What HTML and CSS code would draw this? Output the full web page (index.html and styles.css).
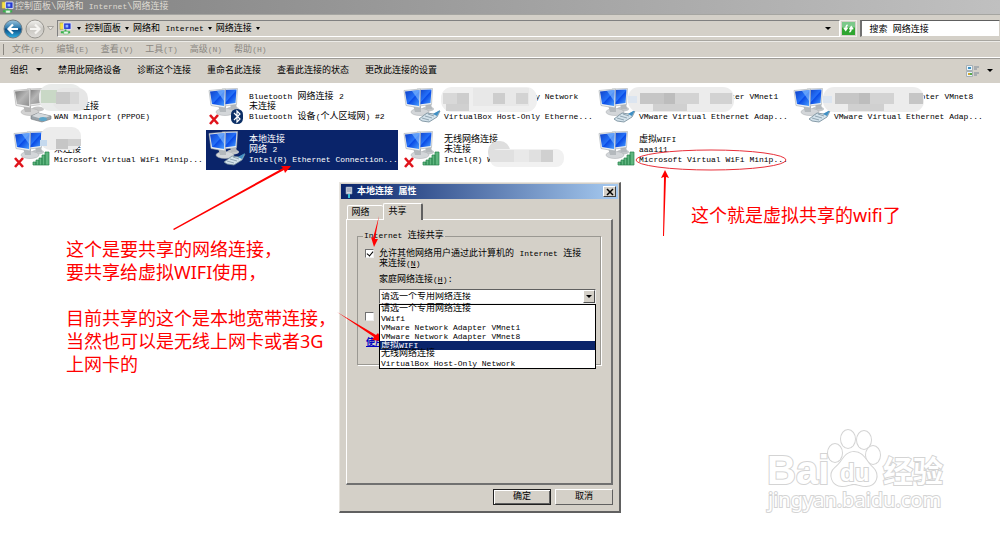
FILE: index.html
```html
<!DOCTYPE html>
<html lang="zh-CN">
<head>
  <meta charset="UTF-8" />
  <meta name="viewport" content="width=device-width, initial-scale=1.0" />
  <title>控制面板\网络和 Internet\网络连接</title>
  <link rel="stylesheet" href="styles.css">
</head>
<body>
  <svg class="defs" aria-hidden="true">
    <defs>
      <linearGradient id="screen" x1="0" y1="0" x2="1" y2="1">
        <stop offset="0" stop-color="#0f3fc4" /><stop offset=".5" stop-color="#2470f8" /><stop offset=".55" stop-color="#0a4be6" /><stop offset="1" stop-color="#4aa0ff" />
      </linearGradient>
      <linearGradient id="screenOff" x1="0" y1="0" x2="1" y2="1">
        <stop offset="0" stop-color="#777" /><stop offset=".5" stop-color="#b5b5b5" /><stop offset="1" stop-color="#8e8e8e" />
      </linearGradient>
      <linearGradient id="orb" x1="0" y1="0" x2="0" y2="1">
        <stop offset="0" stop-color="#9cc4dc" /><stop offset=".45" stop-color="#2b78ac" /><stop offset=".5" stop-color="#0c4a80" /><stop offset="1" stop-color="#2fb4e8" />
      </linearGradient>
      <linearGradient id="orbOff" x1="0" y1="0" x2="0" y2="1">
        <stop offset="0" stop-color="#f2f1ee" /><stop offset=".5" stop-color="#c9c7c2" /><stop offset="1" stop-color="#dedcd8" />
      </linearGradient>
    </defs>
    <symbol id="pc" viewBox="0 0 42 40">
      <ellipse cx="27" cy="22" rx="6" ry="2.500" fill="#c3c7ca" />
      <path d="M24 16 30 16 31 22 25 22z" fill="#b4b9bd" />
      <path d="M16 2 31.500 1.500 30.500 17.500 18 19z" fill="#eef1f3" stroke="#a5abb0" stroke-width=".6" />
      <path d="M17 3 30.500 2.500 29.500 16 18 17.500z" fill="url(#screen)" />
      <ellipse cx="19" cy="25" rx="9" ry="3.500" fill="#d3d6d9" stroke="#a5a9ad" stroke-width=".5" />
      <path d="M12 18 20 19 20 25 14 25z" fill="#b4b9bd" />
      <path d="M3 3.500 19.500 2 19 21 5 18.500z" fill="#eef1f3" stroke="#a5abb0" stroke-width=".6" />
      <path d="M4 4.500 18.500 3 18 19 6 17z" fill="url(#screen)" />
      <path d="M11 4 18.500 3 18 14z" fill="#8cc4ff" opacity=".6" />
    </symbol>
    <symbol id="pc-off" viewBox="0 0 42 40">
      <ellipse cx="27" cy="22" rx="6" ry="2.500" fill="#c5c5c5" />
      <path d="M16 2 31.500 1.500 30.500 17.500 18 19z" fill="#eee" stroke="#aaa" stroke-width=".6" />
      <path d="M17 3 30.500 2.500 29.500 16 18 17.500z" fill="url(#screenOff)" />
      <ellipse cx="19" cy="25" rx="9" ry="3.500" fill="#d2d2d2" stroke="#aaa" stroke-width=".5" />
      <path d="M12 18 20 19 20 25 14 25z" fill="#b5b5b5" />
      <path d="M3 3.500 19.500 2 19 21 5 18.500z" fill="#eee" stroke="#aaa" stroke-width=".6" />
      <path d="M4 4.500 18.500 3 18 19 6 17z" fill="url(#screenOff)" />
    </symbol>
    <symbol id="plug" viewBox="0 0 42 40">
      <path d="M18 32 26 26 33 27 39 24 36 30 28 35 21 34z" fill="#d3e2eb" stroke="#6f8796" stroke-width=".8" />
      <path d="M32 27 39 23 36 29z" fill="#3f8fc4" />
      <path d="M21 31 28 33M24 29 31 31M27 27 33 29" stroke="#7f95a3" stroke-width=".8" />
    </symbol>
    <symbol id="modem" viewBox="0 0 42 40">
      <path d="M20 29 27 26 40 29 40 32 31 35 20 32z" fill="#9aa2a8" stroke="#73797d" stroke-width=".6" />
      <path d="M21 29 27 26 39 29 31 32z" fill="#d5d9dc" />
      <ellipse cx="32" cy="32" rx="4" ry="2" fill="#5ea5c8" />
    </symbol>
    <symbol id="bars" viewBox="0 0 42 40">
      <path d="M22 35v-3h3v3zM25 35v-5h3v5zM28 35v-7h3v7zM31 35v-10h3v10zM34 35v-13h4v13z" fill="#5fb67f" stroke="#26824a" stroke-width=".7" />
    </symbol>
    <symbol id="cross" viewBox="0 0 42 40">
      <path d="M4 28 12 37M12 28 4 37" stroke="#e0141c" stroke-width="2.600" />
    </symbol>
    <symbol id="bt" viewBox="0 0 42 40">
      <rect x="25" y="22" width="12" height="15" rx="5.500" fill="#0c2f66" />
      <path d="M28 26 34 32 31 35V24L34 27 28 33" fill="none" stroke="#fff" stroke-width="1.200" />
    </symbol>
    <symbol id="net" viewBox="0 0 14 14">
      <path d="M1 1h4v7H1z" fill="#f4e04a" stroke="#9a9140" stroke-width=".5" />
      <path d="M5 1h8v7H5z" fill="#2438d0" stroke="#e6e9f5" />
      <path d="M7 3h3v3H7z" fill="#8fb4ff" />
      <path d="M2 11h10M7 8v3" stroke="#37b24a" stroke-width="2" />
      <path d="M5 10h5v3H5z" fill="#e8f5ea" stroke="#37b24a" stroke-width=".5" />
    </symbol>
  </svg>

  <header class="titlebar">
    <svg class="net-icon"><use href="#net" /></svg>
    <h1>控制面板\网络和 <span class="en">Internet</span>\网络连接</h1>
  </header>

  <div class="navbar">
    <button class="orb" aria-label="后退">
      <svg viewBox="0 0 20 20"><circle cx="10" cy="10" r="9" fill="url(#orb)" stroke="#6b7d88" /><path d="M15 10H6M10 5.500 5.500 10 10 14.500" fill="none" stroke="#fff" stroke-width="2.200" /></svg>
    </button>
    <button class="orb" aria-label="前进">
      <svg viewBox="0 0 20 20"><circle cx="10" cy="10" r="9" fill="url(#orbOff)" stroke="#989690" /><path d="M5 10H14M10 5.500 14.500 10 10 14.500" fill="none" stroke="#f6f5f2" stroke-width="2.200" /></svg>
    </button>
    <button class="history" aria-label="最近页面"><svg viewBox="0 0 7 5"><path d="M.5 .5h6L3.500 4z" fill="#e8e6e1" stroke="#8f8d88" stroke-width=".7" /></svg></button>
    <nav class="address">
      <svg class="net-icon"><use href="#net" /></svg>
      <span class="caret"></span><a href="#">控制面板</a>
      <span class="caret"></span><a href="#">网络和 <span class="en">Internet</span></a>
      <span class="caret"></span><a href="#">网络连接</a>
      <span class="caret"></span>
      <span class="caret last"></span>
    </nav>
    <button class="refresh" aria-label="刷新">
      <svg viewBox="0 0 14 14"><path d="M0 0h14v14H0z" fill="#2fa52f" /><path d="M0 0h14v6H0z" fill="#7cc98a" /><path d="M6 3Q4 4 4 8M2 6 4 9 6 6M8 11Q10 10 10 6M8 8 10 5 12 8" fill="none" stroke="#fff" stroke-width="1.500" /></svg>
    </button>
    <input class="search" type="text" aria-label="搜索" value="搜索 网络连接">
  </div>

  <div class="menubar">
    <button>文件<span class="en">(F)</span></button>
    <button>编辑<span class="en">(E)</span></button>
    <button>查看<span class="en">(V)</span></button>
    <button>工具<span class="en">(T)</span></button>
    <button>高级<span class="en">(N)</span></button>
    <button>帮助<span class="en">(H)</span></button>
  </div>

  <div class="toolbar">
    <button>组织<span class="caret"></span></button>
    <button>禁用此网络设备</button>
    <button>诊断这个连接</button>
    <button>重命名此连接</button>
    <button>查看此连接的状态</button>
    <button>更改此连接的设置</button>
    <button class="view" aria-label="更改视图">
      <svg viewBox="0 0 13 12"><path d="M.5 .5h6v5h-6zM.5 6.500h6v5h-6z" fill="#eaf4fb" stroke="#a7b0b5" /><path d="M2 3h3" stroke="#3b8fc0" stroke-width="2" /><path d="M2 9h2" stroke="#d0a52c" stroke-width="2" /><path d="M4 9h2" stroke="#58a848" stroke-width="2" /><path d="M8 2h5M8 4h3M8 8h5M8 10h3" stroke="#7c8a99" /></svg>
      <span class="caret"></span>
    </button>
  </div>

  <main class="connections">
    <div class="item">
      <svg class="icon"><use href="#pc-off" /><use href="#modem" /></svg>
      <div class="text">
        <p>&nbsp;</p>
        <p>已断开连接</p>
        <p class="en">WAN Miniport (PPPOE)</p>
      </div>
      <svg class="mosaic small" viewBox="0 0 50 27">
        <rect width="44" height="27" rx="12" fill="#e9ebea" /><rect x="14" y="4" width="35" height="23" rx="10" fill="#e6e6e6" />
        <path d="M2 6h16v13H2z" fill="#c9d8c6" /><path d="M17 8h14v12H17z" fill="#c9c9c9" /><path d="M31 8h9v12h-9z" fill="#d8d8d8" />
      </svg>
    </div>
    <div class="item">
      <svg class="icon"><use href="#pc" /><use href="#cross" /><use href="#bt" /></svg>
      <div class="text">
        <p><span class="en">Bluetooth</span> 网络连接 <span class="en">2</span></p>
        <p>未连接</p>
        <p><span class="en">Bluetooth</span> 设备<span class="en">(</span>个人区域网<span class="en">) #2</span></p>
      </div>
    </div>
    <div class="item">
      <svg class="icon"><use href="#pc" /><use href="#plug" /></svg>
      <div class="text">
        <p class="en">VirtualBox Host-Only Network</p>
        <p>&nbsp;</p>
        <p class="en">VirtualBox Host-Only Etherne...</p>
      </div>
      <svg class="mosaic wide" viewBox="0 0 106 25">
        <rect x="8" width="96" height="25" rx="11" fill="#efefef" /><path d="M40 1h56v18H40z" fill="#e8e8e8" />
        <path d="M10 6h14v11H10z" fill="#d8d8d8" /><path d="M24 6h12v11H24zM60 6h12v11H60z" fill="#cdcdcd" /><path d="M83 6h12v11H83z" fill="#d3d3d3" /><path d="M13 17h23v7H13z" fill="#d0d0d0" />
      </svg>
    </div>
    <div class="item">
      <svg class="icon"><use href="#pc" /><use href="#plug" /></svg>
      <div class="text">
        <p class="en">VMware Network Adapter VMnet1</p>
        <p>&nbsp;</p>
        <p class="en">VMware Virtual Ethernet Adap...</p>
      </div>
      <svg class="mosaic wide" viewBox="0 0 106 25">
        <rect width="106" height="25" rx="11" fill="#ececec" /><path d="M0 9h9v7H0z" fill="#dce5f0" />
        <path d="M12 6h24v11H12z" fill="#c6c6c6" /><path d="M36 6h11v11H36z" fill="#bdbdbd" /><path d="M47 6h24v11H47z" fill="#d3d3d3" /><path d="M82 6h22v11H82z" fill="#d2d2d2" /><path d="M25 17h34v7H25z" fill="#d0d0d0" />
      </svg>
    </div>
    <div class="item">
      <svg class="icon"><use href="#pc" /><use href="#plug" /></svg>
      <div class="text">
        <p class="en">VMware Network Adapter VMnet8</p>
        <p>&nbsp;</p>
        <p class="en">VMware Virtual Ethernet Adap...</p>
      </div>
      <svg class="mosaic wide" viewBox="0 0 106 25">
        <rect width="101" height="25" rx="11" fill="#ececec" /><path d="M0 9h9v7H0z" fill="#dce5f0" />
        <path d="M12 6h24v11H12z" fill="#c6c6c6" /><path d="M36 6h11v11H36z" fill="#bdbdbd" /><path d="M47 6h24v11H47z" fill="#d3d3d3" /><path d="M86 6h14v11H86z" fill="#c6c6c6" /><path d="M25 17h36v7H25z" fill="#d0d0d0" />
      </svg>
    </div>
    <div class="item">
      <svg class="icon"><use href="#pc" /><use href="#cross" /><use href="#bars" /></svg>
      <div class="text">
        <p>&nbsp;</p>
        <p>未连接</p>
        <p class="en">Microsoft Virtual WiFi Minip...</p>
      </div>
      <svg class="mosaic small" viewBox="0 0 50 27">
        <rect x="2" width="40" height="23" rx="9" fill="#ececec" /><path d="M1 13h7v6H1z" fill="#c5d9ee" />
        <path d="M17 12h12v10H17z" fill="#c6c6c6" /><path d="M29 12h13v7H29z" fill="#cfcfcf" />
      </svg>
    </div>
    <div class="item selected">
      <svg class="icon"><use href="#pc" /><use href="#plug" /></svg>
      <div class="text">
        <p>本地连接</p>
        <p>网络 <span class="en">2</span></p>
        <p class="en">Intel(R) Ethernet Connection...</p>
      </div>
    </div>
    <div class="item">
      <svg class="icon"><use href="#pc" /><use href="#cross" /><use href="#bars" /></svg>
      <div class="text">
        <p>无线网络连接</p>
        <p>未连接</p>
        <p class="en">Intel(R) W</p>
      </div>
      <svg class="mosaic low" viewBox="0 0 78 27">
        <rect y="0" width="22" height="22" rx="10" fill="#dedede" /><rect x="2" y="8" width="74" height="18" rx="8" fill="#f1f1f1" />
        <path d="M2 9h24v12H2zM41 9h12v12H41z" fill="#e0e0e0" /><path d="M53 9h12v12H53z" fill="#d0d0d0" /><path d="M26 9h15v12H26z" fill="#e9e9e9" />
      </svg>
    </div>
    <div class="item">
      <svg class="icon"><use href="#pc" /><use href="#bars" /></svg>
      <div class="text">
        <p>虚拟<span class="en">WIFI</span></p>
        <p class="en">aaa111</p>
        <p class="en">Microsoft Virtual WiFi Minip...</p>
      </div>
    </div>
  </main>

  <section class="dialog" role="dialog" aria-labelledby="dlgTitle">
    <div class="dialog-title">
      <svg viewBox="0 0 8 12"><path d="M1 1h6v7H1z" fill="#cfd6e2" stroke="#8793ab" stroke-width=".6" /><path d="M2 3h4M2 5h4" stroke="#5d6b88" stroke-width=".7" /><path d="M4 8v4" stroke="#35c0d8" stroke-width="2" /></svg>
      <h2 id="dlgTitle">本地连接 属性</h2>
      <button class="close" aria-label="关闭"><svg viewBox="0 0 8 8"><path d="M1 1 7 7M7 1 1 7" stroke="#000" stroke-width="1.500" /></svg></button>
    </div>
    <div class="tabs">
      <button>网络</button>
      <button class="active">共享</button>
    </div>
    <div class="panel">
      <fieldset>
        <legend><span class="en">Internet</span> 连接共享</legend>
        <div class="check">
          <input type="checkbox" id="allow" checked>
          <label for="allow">允许其他网络用户通过此计算机的 <span class="en">Internet</span> 连接<br>来连接<span class="en">(<u>N</u>)</span></label>
        </div>
        <label class="field-label" for="home">家庭网络连接<span class="en">(<u>H</u>)</span>:</label>
        <div class="combo">
          <select id="home"><option>请选一个专用网络连接</option></select>
          <span class="combo-arrow"><span class="caret"></span></span>
          <ul class="options" role="listbox" aria-label="家庭网络连接">
            <li role="option">请选一个专用网络连接</li>
            <li role="option" class="en">VWifi</li>
            <li role="option" class="en">VMware Network Adapter VMnet1</li>
            <li role="option" class="en">VMware Network Adapter VMnet8</li>
            <li role="option" aria-selected="true" class="active">虚拟<span class="en">WIFI</span></li>
            <li role="option">无线网络连接</li>
            <li role="option" class="en">VirtualBox Host-Only Network</li>
          </ul>
        </div>
        <div class="check second"><input type="checkbox" aria-label="允许控制"></div>
        <a class="help" href="#">使用</a>
      </fieldset>
    </div>
    <div class="actions">
      <button class="default">确定</button>
      <button>取消</button>
    </div>
  </section>

  <!-- red notes drawn over the window -->
  <p class="note source">这个是要共享的网络连接，<br>要共享给虚拟WIFI使用，</p>
  <p class="note target">目前共享的这个是本地宽带连接，<br>当然也可以是无线上网卡或者3G<br>上网卡的</p>
  <p class="note wifi">这个就是虚拟共享的wifi了</p>
  <svg class="arrows" viewBox="0 0 1000 536" aria-hidden="true">
    <ellipse cx="711" cy="160" rx="75" ry="10" fill="none" stroke="#e8303a" />
    <g fill="#f00">
      <path d="M173 229 283 168 281 166 291 166 285 173 284 170 174 230z" />
      <path d="M663 236 664 177 661 178 665 170 669 178 666 177 664 236z" />
      <path d="M379 216 375 239 378 239 374 247 371 237 373 238z" />
      <path d="M337 312 376 335 378 333 383 341 372 340 374 337z" />
    </g>
  </svg>

  <svg class="watermark" viewBox="0 0 190 95">
    <g fill="#fff" stroke="#d4d4d4" stroke-width="2" paint-order="stroke">
      <text x="5" y="59" class="wm-bai">Bai</text>
      <ellipse cx="73" cy="28" rx="7" ry="9" /><ellipse cx="86" cy="14" rx="7" ry="9" /><ellipse cx="102" cy="15" rx="7" ry="9" /><ellipse cx="111" cy="30" rx="7" ry="9" />
      <path d="M92 27C82 27 81 37 73 43C66 49 70 61 80 61C86 61 88 59 92 59C96 59 98 61 104 61C114 61 118 50 111 43C104 37 102 27 92 27z" />
      <text x="78" y="56" class="wm-du">du</text>
      <text x="121" y="57" class="wm-cn">经验</text>
      <text x="6" y="82" class="wm-url">jingyan.baidu.com</text>
    </g>
  </svg>
</body>
</html>
```
FILE: styles.css
```css
* {
  box-sizing: border-box;
}
body {
  margin: 0;
  position: relative;
  min-height: 100vh;
  overflow-x: hidden;
  background: #fff;
  color: #000;
  font-family: "Liberation Mono", "Noto Sans CJK SC", monospace;
  font-size: 9px;
  line-height: 10px;
}
h1, h2, p, ul {
  margin: 0;
  padding: 0;
  font-size: 9px;
  font-weight: normal;
}
button, input, select {
  font: inherit;
  color: inherit;
  margin: 0;
  padding: 0;
  border: 0;
  background: none;
}
a {
  color: inherit;
  text-decoration: none;
}
svg {
  display: block;
}
.en, p.en {
  font-size: 8px;
}
.defs {
  position: absolute;
  width: 0;
  height: 0;
}
.caret {
  display: inline-block;
  flex: none;
  border: 3px solid transparent;
  border-top-color: #000;
  border-bottom: 0;
}
.net-icon {
  width: 13px;
  height: 13px;
  flex: none;
}

/* explorer window */
.titlebar {
  display: flex;
  align-items: center;
  gap: 1px;
  height: 15px;
  padding-left: 1px;
  background: linear-gradient(to right, #808080, #c0c0c0);
  border-bottom: 1px solid #a5a5a1;
  color: #dedad2;
}
.navbar {
  display: flex;
  align-items: center;
  height: 26px;
  padding: 2px 0 0 3px;
  background: #d4d0c8;
  border-bottom: 1px solid #a8a6a0;
}
.orb {
  width: 20px;
  height: 20px;
  margin-right: 2px;
}
.history {
  width: 7px;
  margin-right: 3px;
}
.address {
  flex: 1;
  display: flex;
  align-items: center;
  gap: 4px;
  height: 17px;
  padding: 0 8px 0 1px;
  border: 1px solid #808080;
  border-right-color: #fff;
  border-bottom-color: #fff;
}
.address .caret {
  border-width: 2px;
  border-top-width: 3px;
  border-bottom: 0;
}
.address .net-icon {
  margin-right: 1px;
}
.address .last {
  margin-left: auto;
  border-width: 3px;
  border-bottom: 0;
}
.refresh {
  width: 17px;
  height: 17px;
  padding: 1px;
  margin-right: 3px;
  border: 1px solid #f0eee9;
}
.search {
  width: 14%;
  height: 17px;
  padding-left: 7px;
  background: #fff;
  border: 1px solid #d4d0c8;
  border-top: 1px solid #606060;
  border-left: 2px solid #707070;
}
.menubar {
  display: flex;
  align-items: center;
  gap: 12px;
  height: 17px;
  padding-left: 10px;
  background: #d4d0c8;
  border-top: 1px solid #ecebe7;
  border-bottom: 1px solid #fff;
  color: #8a8781;
}
.menubar::before {
  content: "";
  width: 1px;
  height: 11px;
  margin: 0 -4px 0 -7px;
  background: #8a8781;
}
.toolbar {
  display: flex;
  align-items: center;
  gap: 16px;
  height: 25px;
  padding: 0 7px 0 10px;
  background: #d4d0c8;
  border-top: 1px solid #9c9a95;
  white-space: nowrap;
}
.toolbar .caret {
  margin: 0 0 2px 8px;
}
.toolbar .view {
  display: flex;
  align-items: center;
  margin-left: auto;
}
.view svg {
  width: 13px;
  height: 12px;
}

/* connection tiles */
.connections {
  display: grid;
  grid-template-columns: repeat(auto-fill, 192px);
  gap: 3px;
  padding: 4px 0 0 11px;
}
.item {
  position: relative;
  display: flex;
  gap: 1px;
  height: 40px;
  white-space: nowrap;
}
.selected {
  background: #0a246a;
  color: #fff;
}
.icon {
  flex: none;
  width: 42px;
  height: 40px;
}
.text {
  padding-top: 5px;
}
.text p {
  height: 10px;
}
.mosaic {
  position: absolute;
  left: 28px;
  top: -3px;
}
.small {
  width: 50px;
  height: 27px;
}
.wide {
  left: 32px;
  top: 0;
  width: 106px;
  height: 25px;
}
.low {
  left: 87px;
  top: 11px;
  width: 78px;
  height: 27px;
}

/* properties dialog */
.dialog {
  position: absolute;
  left: 339px;
  top: 182px;
  width: 282px;
  padding: 1px;
  background: #d4d0c8;
  border: 1px solid #e8e5df;
  border-right: 2px solid #606060;
  border-bottom: 2px solid #606060;
}
.dialog-title {
  display: flex;
  align-items: center;
  gap: 4px;
  height: 15px;
  padding: 0 2px 0 4px;
  background: linear-gradient(to right, #0a246a, #a6caf0);
  color: #fff;
}
.dialog-title svg {
  width: 8px;
  height: 12px;
}
.dialog-title h2 {
  font-weight: bold;
}
.close {
  display: flex;
  align-items: center;
  justify-content: center;
  width: 13px;
  height: 11px;
  margin-left: auto;
  background: #d4d0c8;
  border: 1px solid #fff;
  border-right-color: #404040;
  border-bottom-color: #404040;
}
.close svg {
  width: 8px;
  height: 8px;
}
.tabs {
  display: flex;
  align-items: flex-end;
  height: 20px;
  margin: 0 6px;
}
.tabs button {
  width: 36px;
  height: 14px;
  padding-right: 10px;
  border: 1px solid #fff;
  border-right: 0;
  border-bottom: 0;
  border-radius: 2px 2px 0 0;
}
.tabs .active {
  position: relative;
  width: 40px;
  height: 17px;
  margin-bottom: -1px;
  background: #d4d0c8;
  border-right: 2px solid #606060;
}
.panel {
  height: 266px;
  margin: 0 5px;
  padding: 11px 10px;
  border: 1px solid #fff;
  border-right: 2px solid #707070;
  border-bottom: 2px solid #707070;
}
fieldset {
  position: relative;
  height: 134px;
  margin: 0;
  padding: 8px 4px 0 7px;
  border: 1px solid #9a9892;
  box-shadow: 1px 1px 0 #fff;
}
legend {
  height: 10px;
  padding: 0 1px;
  margin-left: -2px;
  background: #d4d0c8;
}
.check {
  display: flex;
  gap: 5px;
  line-height: 9px;
  white-space: nowrap;
}
input[type="checkbox"] {
  appearance: none;
  flex: none;
  width: 9px;
  height: 9px;
  background: #fff;
  border: 1px solid #707070;
  border-right-color: #eee;
  border-bottom-color: #eee;
}
input[type="checkbox"]:checked::before {
  content: "";
  display: block;
  width: 3px;
  height: 5px;
  margin-left: 2px;
  border: solid #000;
  border-width: 0 1px 1px 0;
  transform: rotate(40deg);
}
.field-label {
  display: block;
  margin: 6px 0 4px 14px;
}
.combo {
  position: relative;
  margin-left: 14px;
}
.combo select {
  display: block;
  appearance: none;
  width: 100%;
  height: 15px;
  padding: 1px 0 0 1px;
  background: #fff;
  border: 1px solid #606060;
  border-right-color: #eee;
  border-bottom-color: #eee;
}
.combo-arrow {
  position: absolute;
  right: 1px;
  top: 1px;
  display: flex;
  align-items: center;
  justify-content: center;
  width: 12px;
  height: 13px;
  background: #d4d0c8;
  border: 1px solid #fff;
  border-right-color: #505050;
  border-bottom-color: #505050;
  pointer-events: none;
}
.options {
  position: absolute;
  z-index: 1;
  left: 0;
  right: 0;
  top: 15px;
  list-style: none;
  line-height: 9px;
  background: #fff;
  border: 1px solid #000;
}
.options li {
  height: 9px;
  padding-left: 1px;
  white-space: nowrap;
}
.options .active {
  background: #0a246a;
  color: #fff;
}
.second {
  margin-top: 8px;
}
.help {
  display: block;
  margin: 17px 0 0 1px;
  color: #0000c0;
  font-weight: bold;
  text-decoration: underline;
}
.actions {
  display: flex;
  justify-content: flex-end;
  gap: 4px;
  padding: 4px 5px 5px;
}
.actions button {
  width: 58px;
  height: 16px;
  border: 1px solid #fff;
  border-right-color: #606060;
  border-bottom-color: #606060;
}
.actions .default {
  border: 1px solid #202020;
  box-shadow: inset 1px 1px 0 #fff, inset -1px -1px 0 #606060;
}

/* notes */
.note {
  position: absolute;
  color: #f00;
  font-family: "Noto Sans", "Noto Sans CJK SC", sans-serif;
  font-size: 18px;
  font-weight: 400;
  line-height: 23px;
  white-space: nowrap;
}
.source {
  left: 66px;
  top: 238px;
}
.target {
  left: 66px;
  top: 307px;
}
.wifi {
  left: 691px;
  top: 204px;
}
.arrows {
  position: absolute;
  left: 0;
  top: 0;
  width: 1000px;
  height: 536px;
  pointer-events: none;
}
.watermark {
  position: absolute;
  left: 762px;
  top: 425px;
  width: 190px;
  height: 95px;
}
.wm-bai, .wm-du {
  font: bold 40px "Liberation Sans", sans-serif;
}
.wm-du {
  font-size: 24px;
}
.wm-cn {
  font: bold 30px "Noto Sans CJK SC", sans-serif;
}
.wm-url {
  font: 20px "Noto Sans", sans-serif;
}
```
